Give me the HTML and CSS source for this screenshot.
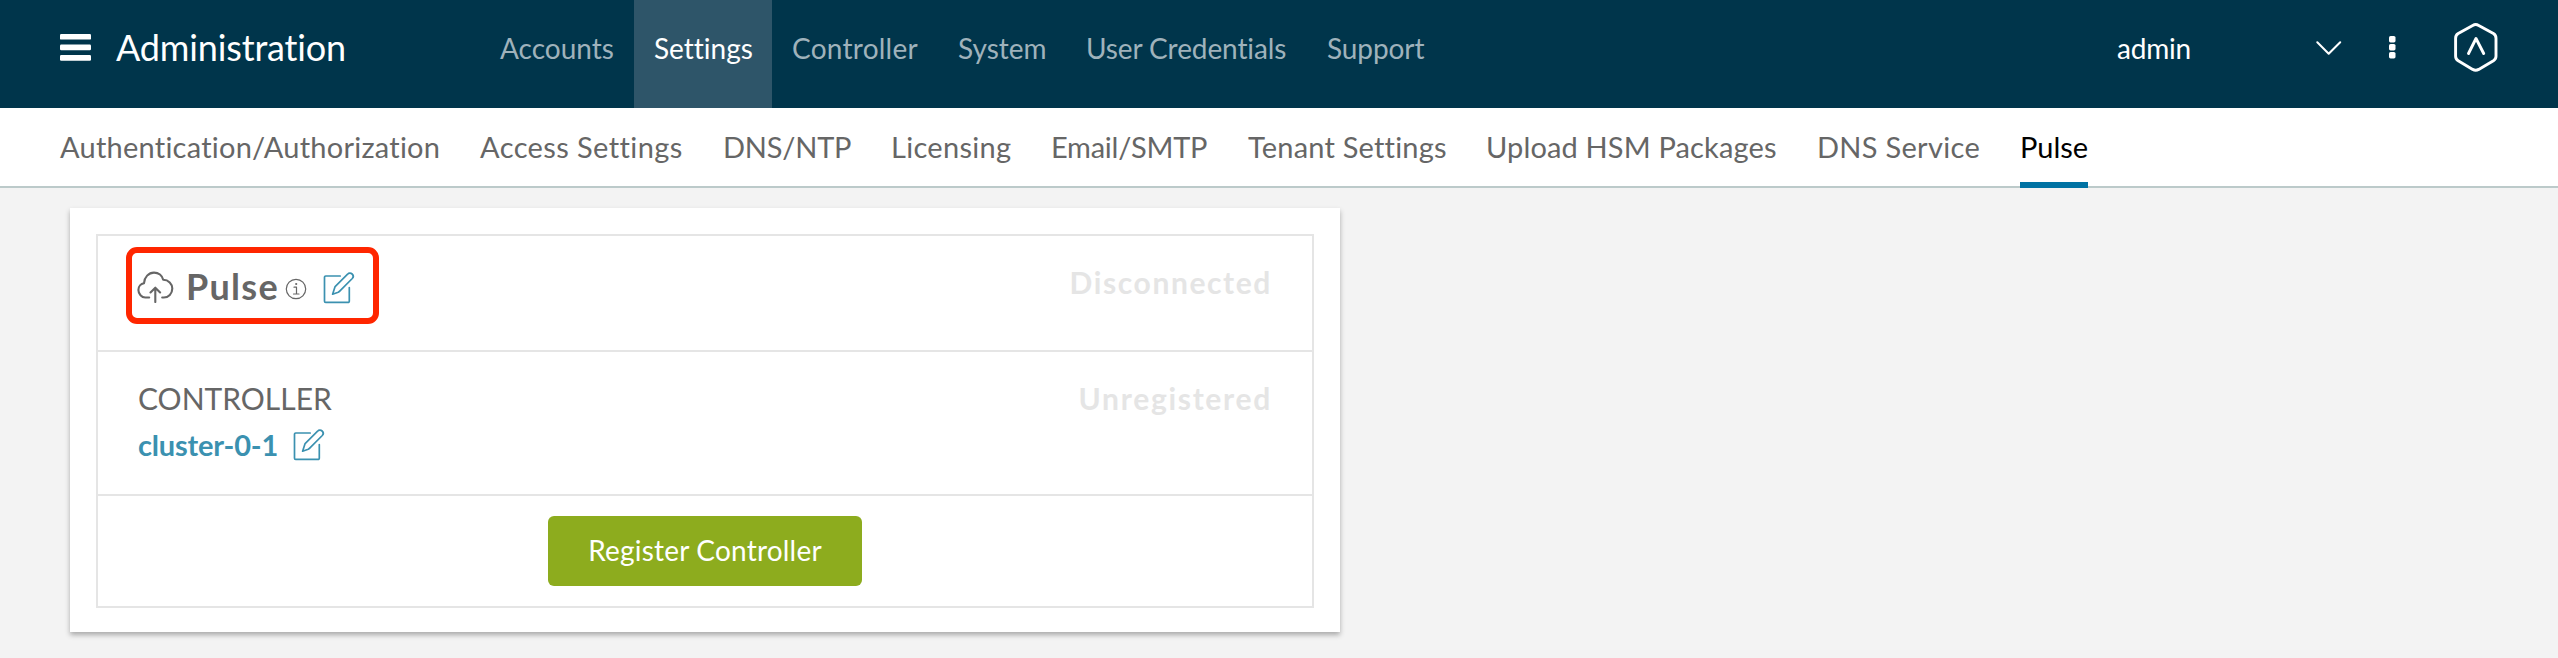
FILE: index.html
```html
<!DOCTYPE html>
<html lang="en">
<head>
<meta charset="utf-8">
<title>Administration</title>
<link rel="stylesheet" href="styles.css">
</head>
<body>
<svg class="defs" aria-hidden="true">
  <symbol id="pencil" viewBox="0 0 32 32">
    <path d="M17.2 4H2.7A1.2 1.2 0 0 0 1.5 5.2v24a1.2 1.2 0 0 0 1.2 1.2h22.4a1.2 1.2 0 0 0 1.2-1.2V15.6"/>
    <path d="M9.6 22.2l2.5-7.6L24.6 2.2a3.1 3.1 0 0 1 4.7 4.3L17.2 18.6Q16.4 19.6 15.2 20.2Z"/>
  </symbol>
</svg>
<header class="topbar">
  <svg class="menu" viewBox="0 0 32 28"><rect x="0" y="0" width="31" height="5.6" rx="1.2"/><rect x="0" y="10.6" width="31" height="5.6" rx="1.2"/><rect x="0" y="21.1" width="31" height="5.6" rx="1.2"/></svg>
  <h1 class="title">Administration</h1>
  <nav class="mainnav">
    <a class="accounts">Accounts</a>
    <a class="settings active">Settings</a>
    <a class="controller">Controller</a>
    <a class="system">System</a>
    <a class="credentials">User Credentials</a>
    <a class="support">Support</a>
  </nav>
  <div class="tools">
    <span class="user">admin</span>
    <svg class="chevron" viewBox="0 0 26 16"><path d="M1.3 1.3L12.7 12.8L24.2 1.3"/></svg>
    <svg class="dots" viewBox="0 0 7 23"><rect width="6.5" height="6.4" rx="1.6"/><rect y="8" width="6.5" height="6.4" rx="1.6"/><rect y="16" width="6.5" height="6.4" rx="1.6"/></svg>
    <svg class="logo" viewBox="0 0 44 49"><path d="M18.7 2.4Q21.7 .7 24.7 2.4L39.4 10.6Q42 12.2 42 15.2V33.3Q42 36.2 39.4 37.8L24.7 46.4Q21.7 48 18.7 46.4L4.2 37.8Q1.6 36.2 1.6 33.3V15.2Q1.6 12.2 4.2 10.6Z"/><path d="M14.5 30.5L22 15.5L29.7 30.5"/></svg>
  </div>
</header>
<nav class="subnav">
  <a class="s-auth">Authentication/Authorization</a>
  <a class="s-access">Access Settings</a>
  <a class="s-dns">DNS/NTP</a>
  <a class="s-lic">Licensing</a>
  <a class="s-mail">Email/SMTP</a>
  <a class="s-tenant">Tenant Settings</a>
  <a class="s-hsm">Upload HSM Packages</a>
  <a class="s-service">DNS Service</a>
  <a class="s-pulse active">Pulse</a>
</nav>
<main class="page">
  <section class="card">
    <div class="panel">
      <div class="row pulse-row">
        <div class="highlight">
          <svg class="cloud" viewBox="0 0 37 32"><path d="M12.2 26.5H8.3C4.7 26.3 1.4 23 1.4 18.9C1.4 15.3 4 12.7 7 12.2C7.3 6.2 11.7 1.6 17 1.6C21.6 1.6 25.2 4.7 26.2 8.8C31.5 8.9 35.3 12.8 35.3 17.6C35.3 22.7 31.5 26.5 26.8 26.5H25.2"/><path d="M18.3 31V17M13.5 21.5L18.3 16.7L23.1 21.5"/></svg>
          <h2 class="heading">Pulse</h2>
          <svg class="info" viewBox="0 0 22 22"><circle cx="11" cy="11" r="9.7"/><path d="M9 9.2H11.5V16M8.5 16H14"/><circle class="dot" cx="11.2" cy="6" r="1.1"/></svg>
          <svg class="edit"><use href="#pencil"/></svg>
        </div>
        <span class="status disconnected">Disconnected</span>
      </div>
      <div class="row controller-row">
        <div>
          <div class="label">CONTROLLER</div>
          <div class="cluster"><a>cluster-0-1</a><svg class="edit"><use href="#pencil"/></svg></div>
        </div>
        <span class="status unregistered">Unregistered</span>
      </div>
      <div class="row action-row"><button class="register">Register Controller</button></div>
    </div>
  </section>
</main>
</body>
</html>
```
FILE: styles.css
```css
* { box-sizing: border-box; }
body {
  margin: 0;
  min-height: 658px;
  background: #f3f3f3;
  color: #666;
  font-family: Lato, "Open Sans", sans-serif;
  font-size: 28px;
  font-variant-ligatures: none;
}
h1, h2 { margin: 0; }
svg { display: block; flex: none; fill: none; stroke-linecap: round; stroke-linejoin: round; }
.defs { position: absolute; width: 0; height: 0; }
a { white-space: nowrap; }

.topbar {
  display: flex;
  height: 108px;
  padding-left: 60px;
  background: #00354b;
  color: #fff;
}
.menu { width: 32px; height: 28px; margin-top: 34px; fill: #fff; }
.title {
  width: 364px;
  margin-left: 24px;
  font-size: 36px;
  font-weight: 400;
  line-height: 94px;
  letter-spacing: -.15px;
}
.mainnav { display: flex; line-height: 96px; }
.mainnav a { height: 108px; padding: 0 20px; color: #9fb2bb; }
.mainnav .active { background: #2e5569; color: #fff; }
.accounts { width: 154px; }
.settings { width: 138px; }
.controller { width: 166px; letter-spacing: .25px; }
.system { width: 128px; }
.credentials { width: 241px; letter-spacing: -.1px; }
.support { width: 138px; letter-spacing: -.1px; }

.tools { display: flex; margin-left: auto; padding-right: 60px; }
.user { width: 199px; line-height: 96px; letter-spacing: -.2px; }
.chevron { width: 26px; height: 16px; margin-top: 41px; stroke: #fff; stroke-width: 2; }
.dots { width: 7px; height: 23px; margin: 36px 0 0 47px; fill: #fff; }
.logo { width: 44px; height: 49px; margin: 23px 0 0 58px; stroke: #fff; stroke-width: 2.9; }

.subnav {
  display: flex;
  gap: 40px;
  height: 80px;
  padding-left: 60px;
  border-bottom: 2px solid #bccaca;
  background: #fff;
  font-size: 29px;
  line-height: 78px;
}
.subnav a { height: 80px; }
.subnav .active { border-bottom: 6px solid #0072a3; color: #000; }
.s-auth { width: 380px; letter-spacing: .24px; }
.s-access { width: 203px; letter-spacing: .4px; }
.s-dns { width: 128px; letter-spacing: -.2px; }
.s-lic { width: 120px; letter-spacing: .3px; }
.s-mail { width: 157px; letter-spacing: -.25px; }
.s-tenant { width: 198px; letter-spacing: .2px; }
.s-hsm { width: 291px; letter-spacing: .15px; }
.s-service { width: 163px; letter-spacing: .3px; }
.s-pulse { width: 68px; }

.page { padding: 20px 70px; }
.card {
  width: 1270px;
  height: 424px;
  padding: 26px;
  background: #fff;
  box-shadow: 0 3px 5px rgba(0, 0, 0, .3);
}
.panel { border: 2px solid #e5e5e5; }
.row { display: flex; justify-content: space-between; }
.row + .row { border-top: 2px solid #e5e5e5; }

.pulse-row { height: 114px; padding: 11px 40px 0 28px; }
.highlight {
  display: flex;
  width: 253px;
  height: 77px;
  padding-left: 5px;
  border: 6px solid #ff2600;
  border-radius: 11px;
}
.cloud { width: 37px; height: 32px; margin-top: 18px; stroke: #666; stroke-width: 2.1; }
.heading {
  width: 99px;
  margin-left: 12px;
  font-size: 36px;
  font-weight: 700;
  line-height: 66px;
  letter-spacing: 1.3px;
}
.info { width: 22px; height: 22px; margin-top: 25px; stroke: #666; stroke-width: 1.2; }
.info .dot { fill: #666; stroke: none; }
.edit { width: 32px; height: 32px; stroke: #3b91b0; stroke-width: 1.7; }
.highlight .edit { margin: 19px 0 0 16px; }
.status { color: #e5e5e5; font-size: 30px; font-weight: 700; line-height: 36px; }
.disconnected { margin-top: 17px; letter-spacing: 1.6px; }
.unregistered { margin-top: 28px; letter-spacing: 1.7px; }

.controller-row { height: 144px; padding: 0 40px; }
.label { margin-top: 28px; font-size: 30px; line-height: 36px; letter-spacing: 0; }
.cluster { display: flex; margin-top: 12px; }
.cluster a {
  width: 155px;
  color: #3b91b0;
  font-size: 29px;
  font-weight: 700;
  line-height: 34px;
  letter-spacing: -.2px;
}
.cluster .edit { margin-top: 1px; }

.action-row { justify-content: center; height: 112px; padding: 20px 0 0; }
.register {
  width: 314px;
  height: 70px;
  padding: 0 0 2px;
  border: 0;
  border-radius: 6px;
  background: #8dac1e;
  color: #fff;
  font: inherit;
  letter-spacing: .2px;
}
```
